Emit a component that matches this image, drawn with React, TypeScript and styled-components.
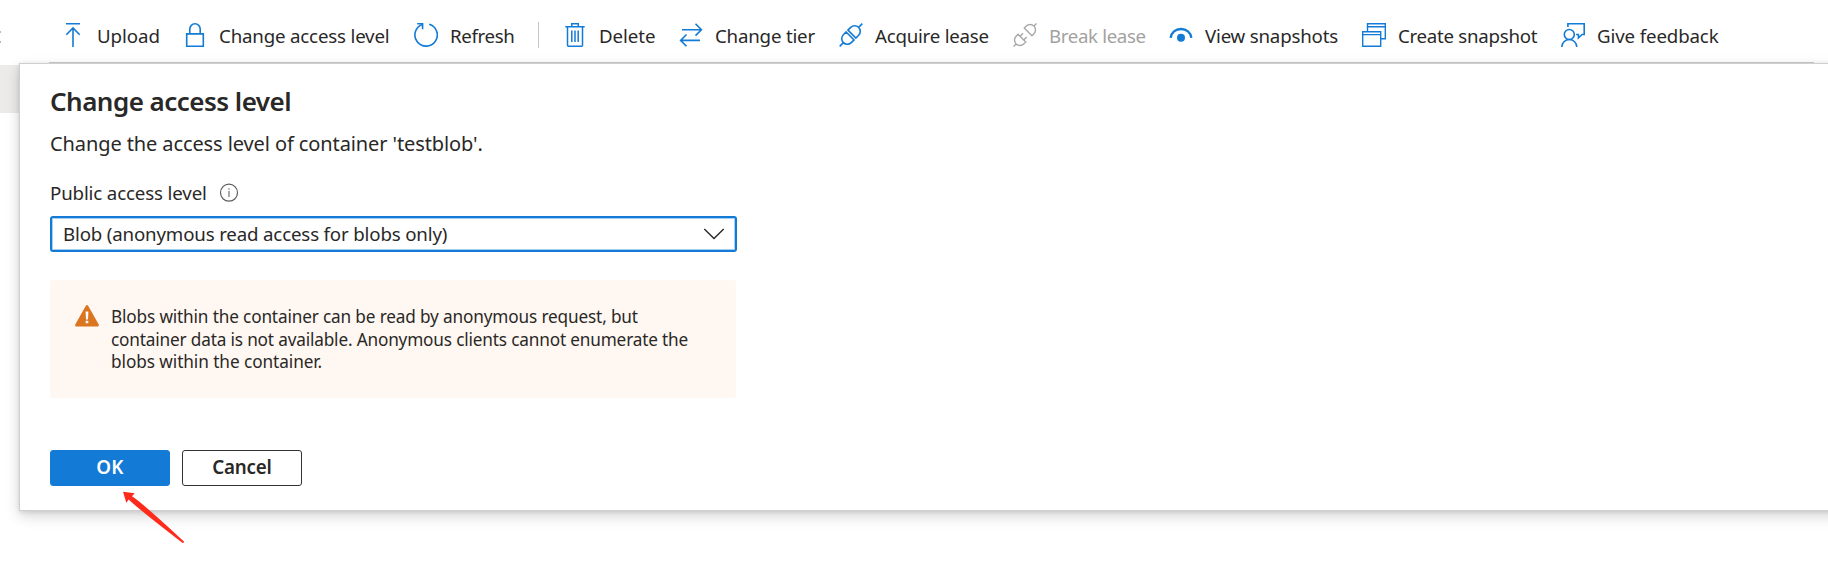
import React from "react";
import styled, { createGlobalStyle } from "styled-components";

const BLUE = "#137ad5";

const GlobalStyle = createGlobalStyle`
  * { box-sizing: border-box; }
  body {
    margin: 0;
    background: #fff;
    color: #292827;
    font-family: "Noto Sans", "Open Sans", sans-serif;
    overflow: hidden;
  }
`;

const Page = styled.div`
  position: relative;
  height: 574px;
  overflow: hidden;
`;

const Header = styled.header`
  display: flex;
  height: 63px;
`;

const HeaderEdge = styled.div`
  width: 49px;
  padding-top: 31px;
`;

const Toolbar = styled.nav`
  display: flex;
  align-items: center;
  flex: 1;
  margin-right: 14px;
  padding: 8px 0 0 12px;
  border-bottom: 1px solid #d0cfce;
`;

const Command = styled.button<{ $width: number; $disabled?: boolean }>`
  display: flex;
  align-items: center;
  gap: 12px;
  flex: none;
  width: ${(p) => p.$width}px;
  padding: 0;
  border: 0;
  background: none;
  font-family: inherit;
  color: ${(p) => (p.$disabled ? "#a3a2a1" : "#292827")};
  text-align: left;

  svg {
    flex: none;
    color: ${(p) => (p.$disabled ? "#a8a7a6" : BLUE)};
  }
`;

const CommandLabel = styled.span<{ $tracking: number }>`
  padding-top: 1px;
  font-size: 18.7px;
  line-height: 26px;
  letter-spacing: ${(p) => p.$tracking}px;
  white-space: nowrap;
`;

const Separator = styled.div`
  width: 1px;
  height: 26px;
  margin-right: 24px;
  background: #c8c6c4;
`;

const Main = styled.main`
  display: flex;
  height: 448px;
`;

const ListEdge = styled.div`
  width: 19px;
  flex: none;
  padding-top: 2px;
`;

const SelectedRow = styled.div`
  height: 48px;
  background: #edebe9;
`;

const Panel = styled.section`
  flex: 1;
  margin-right: -20px;
  padding: 19px 30px 0;
  background: #fff;
  border: 1px solid #d0cfce;
  box-shadow: 0 5px 13px rgba(0, 0, 0, 0.17), 0 1px 4px rgba(0, 0, 0, 0.1);
`;

const Title = styled.h2`
  margin: 0;
  font-size: 26px;
  font-weight: 600;
  line-height: 36px;
  letter-spacing: -0.52px;
`;

const Description = styled.p`
  margin: 11px 0 0;
  font-size: 20px;
  line-height: 28px;
  letter-spacing: -0.1px;
`;

const FieldLabel = styled.div`
  display: flex;
  align-items: center;
  gap: 12px;
  height: 26px;
  margin: 22px 0 10px;
  font-size: 18.7px;
  line-height: 26px;
  letter-spacing: -0.14px;
`;

const Select = styled.div`
  display: flex;
  align-items: center;
  justify-content: space-between;
  width: 687px;
  height: 36px;
  padding: 0 10px 0 11px;
  border: 2px solid ${BLUE};
  border-radius: 3px;
  box-shadow: inset 0 0 0 1px #a9cff0;
  font-size: 18.7px;
  line-height: 26px;
  letter-spacing: -0.165px;
`;

const Warning = styled.div`
  display: flex;
  gap: 12px;
  width: 686px;
  height: 118px;
  margin-top: 28px;
  padding: 25px 25px 0;
  background: #fff7f1;
  border-radius: 3px;
`;

const WarningText = styled.div`
  padding-top: 1px;
  font-size: 17.2px;
  line-height: 22.5px;
`;

const WarningLine = styled.div<{ $tracking: number }>`
  letter-spacing: ${(p) => p.$tracking}px;
  white-space: nowrap;
`;

const Actions = styled.div`
  display: flex;
  gap: 12px;
  margin-top: 52px;
`;

const ActionButton = styled.button<{ $primary?: boolean }>`
  width: 120px;
  height: 36px;
  padding: 0 0 3px;
  border: 1px solid ${(p) => (p.$primary ? BLUE : "#333231")};
  border-radius: 3px;
  background: ${(p) => (p.$primary ? BLUE : "#fff")};
  color: ${(p) => (p.$primary ? "#fff" : "#292827")};
  font-family: inherit;
  font-size: 18.8px;
  font-weight: 600;
  line-height: 26px;
  letter-spacing: ${(p) => (p.$primary ? 0.2 : -0.2)}px;
`;

const Pointer = styled.svg`
  position: absolute;
  left: 120px;
  top: 488px;
`;

type IconProps = { children: React.ReactNode; width?: number };

const Icon = ({ children, width = 1.6 }: IconProps) => (
  <svg width="24" height="24" viewBox="0 0 24 24" fill="none" stroke="currentColor" strokeWidth={width}>
    {children}
  </svg>
);

const UploadIcon = () => (
  <Icon>
    <path d="M5 .8h14M12 24V5M5.3 11.7 12 5l6.7 6.7" />
  </Icon>
);

const LockIcon = () => (
  <Icon>
    <path d="M3.7 10.9h16.6v12.3H3.7zM6.8 10.9V6a5.2 5.2 0 0 1 10.4 0v4.9" />
  </Icon>
);

const RefreshIcon = () => (
  <Icon>
    <path d="M15.2 1.2A11.2 11.2 0 1 1 8.4 1.4" />
    <path d="M3.2 .8h5.4v5.4" />
  </Icon>
);

const DeleteIcon = () => (
  <Icon width={1.5}>
    <path d="M2.3 3.7h19.4M8.7 3.5V.8h6.6v2.7M4.5 3.8v18.4q0 1 1 1h13q1 0 1-1V3.8" />
    <path d="M8.8 7.5v11.5M12 7.5v11.5M15.2 7.5v11.5" />
  </Icon>
);

const TierIcon = () => (
  <Icon>
    <path d="M3 6.7h19M16.5 .8l5.9 5.9-5.9 5.9M21 17.4H2M7.5 11.5l-5.9 5.9 5.9 5.9" />
  </Icon>
);

const PlugIcon = () => (
  <Icon>
    <g transform="rotate(45 12 12)">
      <path d="M12-4v5.2M12 28v-5.2M6.4 10.7h11.2V6.8a5.6 5.6 0 0 0-11.2 0zM6.4 13.3h11.2v3.9a5.6 5.6 0 0 1-11.2 0z" />
    </g>
  </Icon>
);

const UnplugIcon = () => (
  <Icon width={1.4}>
    <g transform="rotate(45 12 12)">
      <path d="M12-4.2v3.6M12 28.2v-3.6M6.6 7.6h10.8V4.8a5.4 5.4 0 0 0-10.8 0z" />
      <path d="M6.6 16.4h10.8v2.8a5.4 5.4 0 0 1-10.8 0zM9.4 16.4v-4.2M14.6 16.4v-4.2" />
    </g>
  </Icon>
);

const EyeIcon = () => (
  <Icon width={2.4}>
    <path d="M1.7 14.8C2.3 9.5 6.5 6 12 6s9.7 3.5 10.3 8.8" />
    <circle cx="12" cy="14.8" r="4" fill="currentColor" stroke="none" />
  </Icon>
);

const SnapshotIcon = () => (
  <Icon width={1.4}>
    <path d="M5.5 8V.7h17.8v15h-4.5M5.5 3.7h17.8M.7 8.7h18v14.6H.7zM.7 11.6h18" />
  </Icon>
);

const FeedbackIcon = () => (
  <Icon>
    <path d="M6.9 4V.8h16.3v10.7h-2.1l-3.7 3.5v-3.5h-2.3" />
    <circle cx="8.3" cy="11.5" r="5" />
    <path d="M.8 24a7.5 7.5 0 0 1 15 0" />
  </Icon>
);

type CommandItem = {
  label: string;
  icon: React.ComponentType;
  width: number;
  tracking: number;
  disabled?: boolean;
};

const fileCommands: CommandItem[] = [
  { label: "Upload", icon: UploadIcon, width: 122, tracking: -0.05 },
  { label: "Change access level", icon: LockIcon, width: 231, tracking: -0.18 },
  { label: "Refresh", icon: RefreshIcon, width: 124, tracking: -0.35 },
];

const blobCommands: CommandItem[] = [
  { label: "Delete", icon: DeleteIcon, width: 116, tracking: -0.07 },
  { label: "Change tier", icon: TierIcon, width: 160, tracking: -0.2 },
  { label: "Acquire lease", icon: PlugIcon, width: 174, tracking: -0.23 },
  { label: "Break lease", icon: UnplugIcon, width: 156, tracking: -0.36, disabled: true },
  { label: "View snapshots", icon: EyeIcon, width: 193, tracking: -0.2 },
  { label: "Create snapshot", icon: SnapshotIcon, width: 199, tracking: -0.28 },
  { label: "Give feedback", icon: FeedbackIcon, width: 160, tracking: -0.13 },
];

const CommandButton = ({ label, icon: Glyph, width, tracking, disabled }: CommandItem) => (
  <Command $width={width} $disabled={disabled} disabled={disabled}>
    <Glyph />
    <CommandLabel $tracking={tracking}>{label}</CommandLabel>
  </Command>
);

const InfoIcon = () => (
  <svg width="20" height="20" viewBox="0 0 20 20" fill="none" stroke="#605e5c">
    <circle cx="10" cy="9.7" r="8.5" strokeWidth="1.2" />
    <path d="M10 7.9v6.2M10 5.3v1.5" stroke="#8a8886" strokeWidth="1.4" />
  </svg>
);

const WarningIcon = () => (
  <svg width="24" height="22" viewBox="0 0 24 22">
    <path
      d="M12 1.4 22.6 20.2H1.4z"
      fill="#db7520"
      stroke="#db7520"
      strokeWidth="2.6"
      strokeLinejoin="round"
    />
    <path d="M10.6 6.4h2.8l-.4 8h-2zM10.7 15.7h2.6v2.5h-2.6z" fill="#fff" />
  </svg>
);

export default function App() {
  return (
    <Page>
      <GlobalStyle />
      <Header>
        <HeaderEdge>
          <svg width="2" height="12" viewBox="0 0 2 12" display="block">
            <path d="M0 0h1v2H0zM0 10h1v2H0z" fill="#b8b8b8" />
          </svg>
        </HeaderEdge>
        <Toolbar>
          {fileCommands.map((c) => (
            <CommandButton key={c.label} {...c} />
          ))}
          <Separator />
          {blobCommands.map((c) => (
            <CommandButton key={c.label} {...c} />
          ))}
        </Toolbar>
      </Header>
      <Main>
        <ListEdge>
          <SelectedRow />
        </ListEdge>
        <Panel>
          <Title>Change access level</Title>
          <Description>Change the access level of container 'testblob'.</Description>
          <FieldLabel>
            Public access level
            <InfoIcon />
          </FieldLabel>
          <Select>
            Blob (anonymous read access for blobs only)
            <svg width="22" height="14" viewBox="0 0 22 14" fill="none" stroke="#292827" strokeWidth="1.4">
              <path d="M1.3 2 11 11.6 20.7 2" />
            </svg>
          </Select>
          <Warning>
            <WarningIcon />
            <WarningText>
              <WarningLine $tracking={-0.149}>
                Blobs within the container can be read by anonymous request, but
              </WarningLine>
              <WarningLine $tracking={-0.165}>
                container data is not available. Anonymous clients cannot enumerate the
              </WarningLine>
              <WarningLine $tracking={-0.06}>blobs within the container.</WarningLine>
            </WarningText>
          </Warning>
          <Actions>
            <ActionButton $primary>OK</ActionButton>
            <ActionButton>Cancel</ActionButton>
          </Actions>
        </Panel>
      </Main>
      <Pointer width="68" height="60" viewBox="120 488 68 60">
        <path
          d="M123 491.7 134.7 493.3 132 496.3Q142 502.5 184.2 541.8L183 543.3Q136 507 128.7 499.5L126.3 502.8z"
          fill="#fe2b1d"
        />
      </Pointer>
    </Page>
  );
}
